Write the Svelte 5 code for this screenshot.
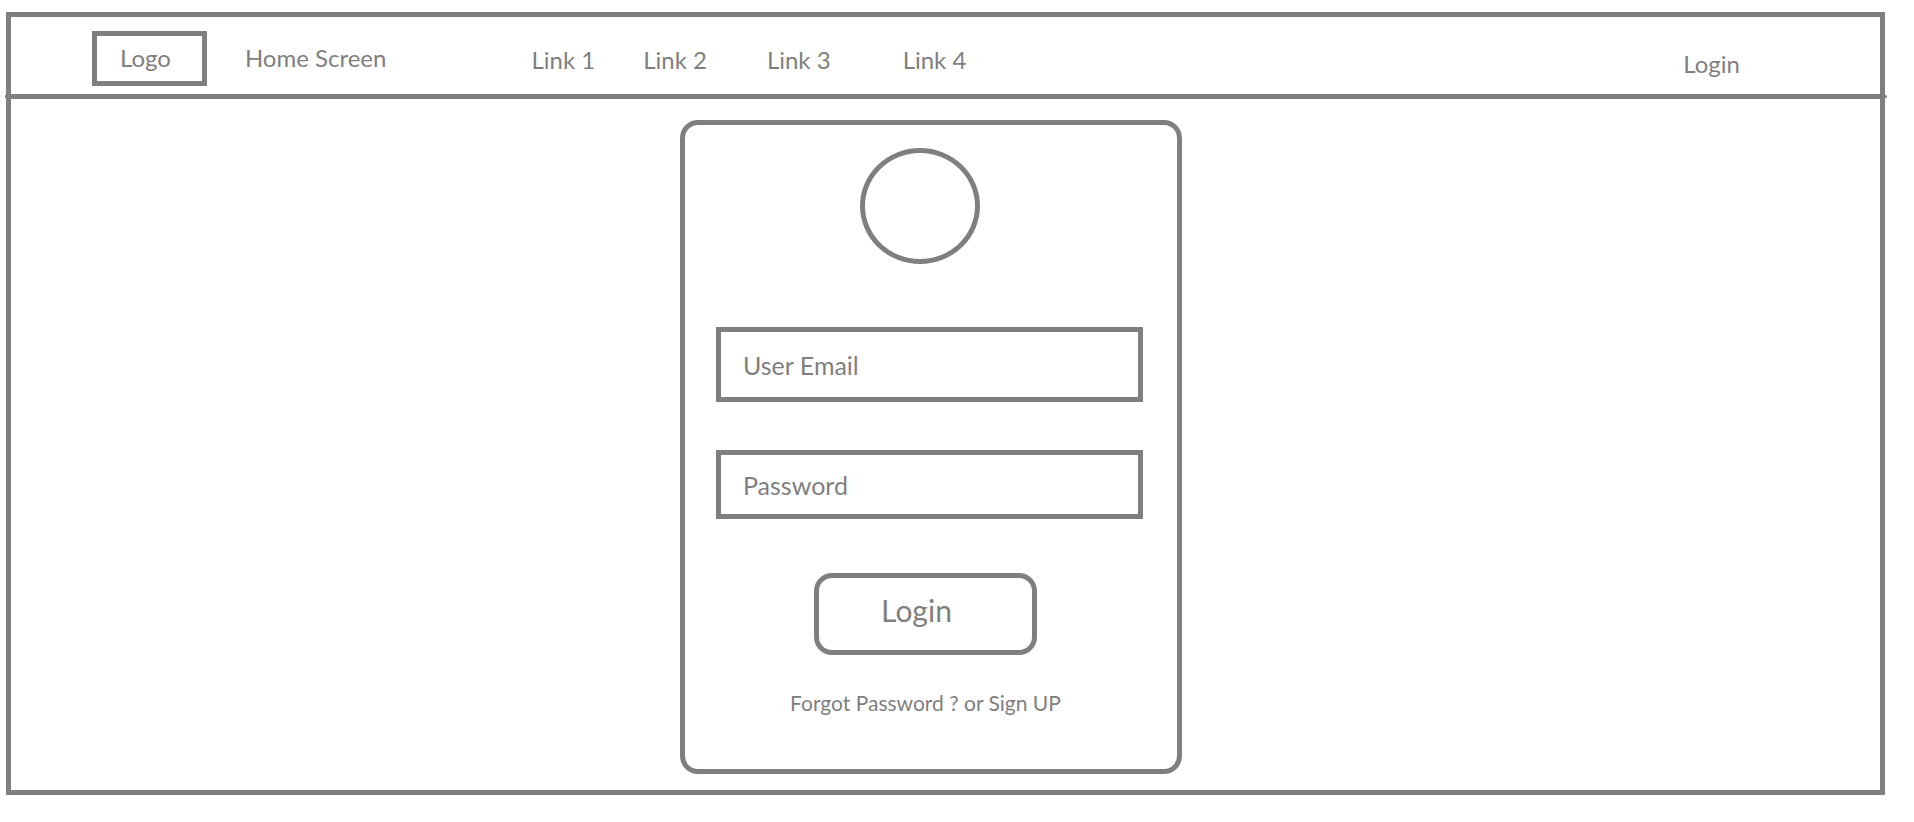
<script>
  const links = ['Link 1', 'Link 2', 'Link 3', 'Link 4'];
  let email = $state('');
  let password = $state('');
</script>

<div class="frame">
  <header>
    <a class="logo" href="#home">Logo</a>
    <span class="title">Home Screen</span>
    <nav aria-label="Main">
      {#each links as link}
        <a href="#{link.replace(' ', '-').toLowerCase()}">{link}</a>
      {/each}
    </nav>
    <a class="account" href="#login">Login</a>
  </header>

  <main>
    <form class="card" onsubmit={(e) => e.preventDefault()}>
      <div class="portrait">
        <div class="avatar"></div>
      </div>
      <input class="email" type="email" aria-label="User Email" placeholder="User Email" bind:value={email} />
      <input class="password" type="password" aria-label="Password" placeholder="Password" bind:value={password} />
      <div class="actions">
        <button type="submit">Login</button>
        <p><a href="#forgot">Forgot Password ?</a> or <a href="#signup">Sign UP</a></p>
      </div>
    </form>
  </main>
</div>

<style>
  :global(body) {
    background: #fff;
  }

  .frame {
    --line: #7f7f7f;
    margin: 12px 29px 0 6px;
    border: 5px solid var(--line);
    color: var(--line);
    font: 24px/30px Lato, sans-serif;
  }

  a {
    color: inherit;
    text-decoration: none;
    white-space: nowrap;
  }

  header {
    position: relative;
    display: flex;
    align-items: center;
    box-sizing: border-box;
    min-height: 82px;
    padding: 6px 140px 0 81px;
    border-bottom: 5px solid var(--line);
  }

  /* Divider tips that poke past the frame */
  header::after {
    content: '';
    position: absolute;
    left: -6px;
    right: -7px;
    bottom: -4px;
    height: 3px;
    border-radius: 0 2px 2px 0;
    background: var(--line);
  }

  .logo {
    padding: 7px 31px 8px 23px;
    border: 5px solid var(--line);
  }

  .title {
    margin-left: 38px;
    padding-bottom: 2px;
    white-space: nowrap;
  }

  nav {
    display: flex;
    margin-left: 145px;
    padding-top: 2px;
  }

  nav a {
    margin-right: 48px;
  }

  nav a:nth-child(2) {
    margin-right: 60px;
  }

  nav a:nth-child(3) {
    margin-right: 72px;
  }

  .account {
    margin-left: auto;
    padding-top: 10px;
  }

  main {
    display: flex;
    justify-content: center;
    padding: 21px 29px 16px 0;
  }

  .card {
    display: flex;
    flex-direction: column;
    box-sizing: border-box;
    width: 100%;
    max-width: 502px;
    padding: 23px 34px 51px 31px;
    border: 5px solid var(--line);
    border-radius: 18px;
  }

  .portrait {
    display: flex;
    justify-content: center;
    padding-right: 20px;
  }

  .avatar {
    box-sizing: border-box;
    width: 120px;
    height: 116px;
    border: 5px solid var(--line);
    border-radius: 50%;
  }

  input {
    box-sizing: border-box;
    width: 100%;
    padding: 0 24px 0 22px;
    border: 5px solid var(--line);
    border-radius: 0;
    background: #fff;
    color: inherit;
    font: inherit;
    font-size: 25px;
  }

  input::placeholder {
    color: inherit;
    opacity: 1;
  }

  .email {
    height: 75px;
    margin-top: 63px;
  }

  .password {
    height: 69px;
    margin-top: 48px;
  }

  .actions {
    display: flex;
    flex-direction: column;
    align-items: center;
    margin-top: 54px;
    padding-right: 8px;
  }

  button {
    box-sizing: border-box;
    width: 223px;
    height: 82px;
    padding: 0 18px 8px 0;
    border: 5px solid var(--line);
    border-radius: 18px;
    background: #fff;
    color: inherit;
    font: inherit;
    font-size: 30px;
  }

  p {
    margin: 33px 0 0;
    font-size: 21px;
  }
</style>
